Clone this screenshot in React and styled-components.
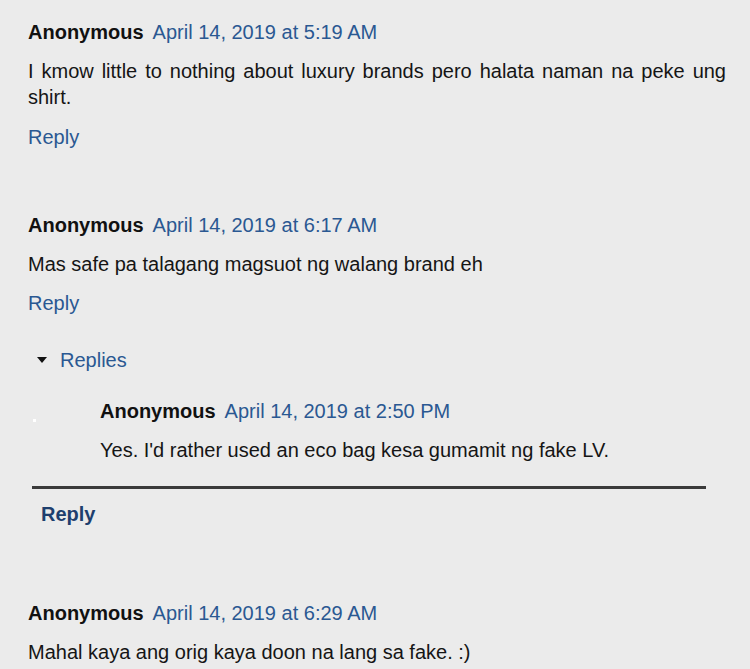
import React from "react";
import styled, { createGlobalStyle } from "styled-components";

const Global = createGlobalStyle`
  html, body { margin: 0; padding: 0; background: #ebebeb; }
  body { font-family: "Liberation Sans", Arial, sans-serif; font-size: 20px; color: #111; }
`;

const Page = styled.div`
  padding: 19px 24px 0 28px;
  width: 698px;
  display: flex;
  flex-direction: column;
`;

const Comment = styled.div`
  display: flex;
  flex-direction: column;
  margin-top: ${(p) => p.$gap || 0}px;
`;

const Header = styled.div`
  display: flex;
  gap: 9px;
  line-height: 26px;
  white-space: nowrap;
`;

const Name = styled.span`
  font-weight: bold;
  color: #111;
`;

const DateLink = styled.a`
  color: #2a5892;
  text-decoration: none;
`;

const Body = styled.p`
  margin: 13px 0 0;
  line-height: 26px;
  text-align: justify;
  color: #151515;
`;

const ReplyLink = styled.a`
  display: block;
  margin-top: ${(p) => p.$top ?? 13}px;
  margin-left: ${(p) => p.$left || 0}px;
  line-height: 26px;
  color: ${(p) => (p.$strong ? "#1e3f6e" : "#2a5892")};
  font-weight: ${(p) => (p.$strong ? "bold" : "normal")};
  text-decoration: none;
`;

const Thread = styled.div`
  margin: 31px 20px 0 4px;
  display: flex;
  flex-direction: column;
`;

const Toggle = styled.div`
  display: flex;
  align-items: center;
  gap: 13px;
  padding-left: 5px;
  line-height: 26px;
  color: #2a5892;
`;

const NestedRow = styled.div`
  display: flex;
  margin-top: 25px;
`;

const AvatarSlot = styled.div`
  width: 68px;
  flex: none;
  padding-top: 21px;
`;

const Dot = styled.div`
  width: 3px;
  height: 3px;
  margin-left: 1px;
  background: #fff;
`;

const NestedContent = styled.div`
  display: flex;
  flex-direction: column;
  flex: 1;
`;

const Divider = styled.hr`
  margin: 23px 0 0;
  border: none;
  height: 3px;
  background: #3a3a3a;
`;

const Triangle = () => (
  <svg width="10" height="6" viewBox="0 0 10 6">
    <path d="M0 0 L10 0 L5 6 Z" fill="#111" />
  </svg>
);

const top = [
  {
    date: "April 14, 2019 at 5:19 AM",
    text: "I kmow little to nothing about luxury brands pero halata naman na peke ung shirt.",
  },
];

export default function App() {
  return (
    <>
      <Global />
      <Page>
        <Comment>
          <Header>
            <Name>Anonymous</Name>
            <DateLink>{top[0].date}</DateLink>
          </Header>
          <Body>{top[0].text}</Body>
          <ReplyLink $top={14}>Reply</ReplyLink>
        </Comment>

        <Comment $gap={62}>
          <Header>
            <Name>Anonymous</Name>
            <DateLink>April 14, 2019 at 6:17 AM</DateLink>
          </Header>
          <Body>Mas safe pa talagang magsuot ng walang brand eh</Body>
          <ReplyLink>Reply</ReplyLink>
        </Comment>

        <Thread>
          <Toggle>
            <Triangle />
            <span>Replies</span>
          </Toggle>
          <NestedRow>
            <AvatarSlot>
              <Dot />
            </AvatarSlot>
            <NestedContent>
              <Header>
                <Name>Anonymous</Name>
                <DateLink>April 14, 2019 at 2:50 PM</DateLink>
              </Header>
              <Body>Yes. I'd rather used an eco bag kesa gumamit ng fake LV.</Body>
            </NestedContent>
          </NestedRow>
          <Divider />
          <ReplyLink $strong $top={12} $left={9}>
            Reply
          </ReplyLink>
        </Thread>

        <Comment $gap={73}>
          <Header>
            <Name>Anonymous</Name>
            <DateLink>April 14, 2019 at 6:29 AM</DateLink>
          </Header>
          <Body>Mahal kaya ang orig kaya doon na lang sa fake. :)</Body>
        </Comment>
      </Page>
    </>
  );
}
